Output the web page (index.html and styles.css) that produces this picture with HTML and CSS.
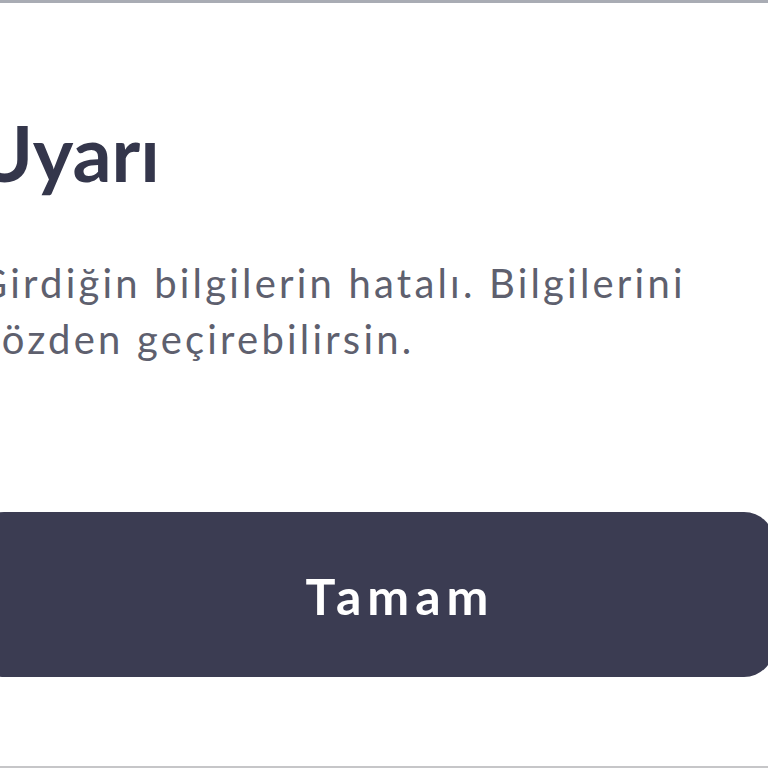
FILE: index.html
```html
<!DOCTYPE html>
<html lang="tr">
<head>
<meta charset="utf-8">
<title>Uyarı</title>
<link rel="stylesheet" href="styles.css">
</head>
<body>
<div class="screen">
  <div class="dialog">
    <h1 class="title">Uyarı</h1>
    <p class="message">Girdiğin bilgilerin hatalı. Bilgilerini gözden geçirebilirsin.</p>
    <button class="ok-button" type="button">Tamam</button>
  </div>
</div>
</body>
</html>
```
FILE: styles.css
```css
html, body {
  margin: 0;
  padding: 0;
  background: #ffffff;
}

.screen {
  width: 768px;
  height: 768px;
  box-sizing: border-box;
  overflow: hidden;
  border-top: 3px solid #a9acb4;
  border-bottom: 2px solid #c6c6c8;
  background: #ffffff;
}

.dialog {
  display: flex;
  flex-direction: column;
  margin-left: -20px;
  margin-right: -6px;
}

.title {
  margin: 111px 0 0 -4px;
  font-family: Lato, "Open Sans", sans-serif;
  font-weight: 700;
  font-size: 77px;
  line-height: 77px;
  color: #34364b;
}

.message {
  margin: 64px 0 0 -2px;
  width: 742px;
  font-family: Lato, "Open Sans", sans-serif;
  font-weight: 400;
  font-size: 40px;
  line-height: 56px;
  letter-spacing: 3.2px;
  color: #5e606e;
}

.ok-button {
  margin: 145px 0 0 -6px;
  height: 165px;
  padding: 3px 0 0 52px;
  border: none;
  border-radius: 30px;
  background: #3b3c52;
  color: #ffffff;
  font-family: Lato, "Open Sans", sans-serif;
  font-weight: 700;
  font-size: 50px;
  line-height: 50px;
  letter-spacing: 6px;
  cursor: pointer;
}
```
